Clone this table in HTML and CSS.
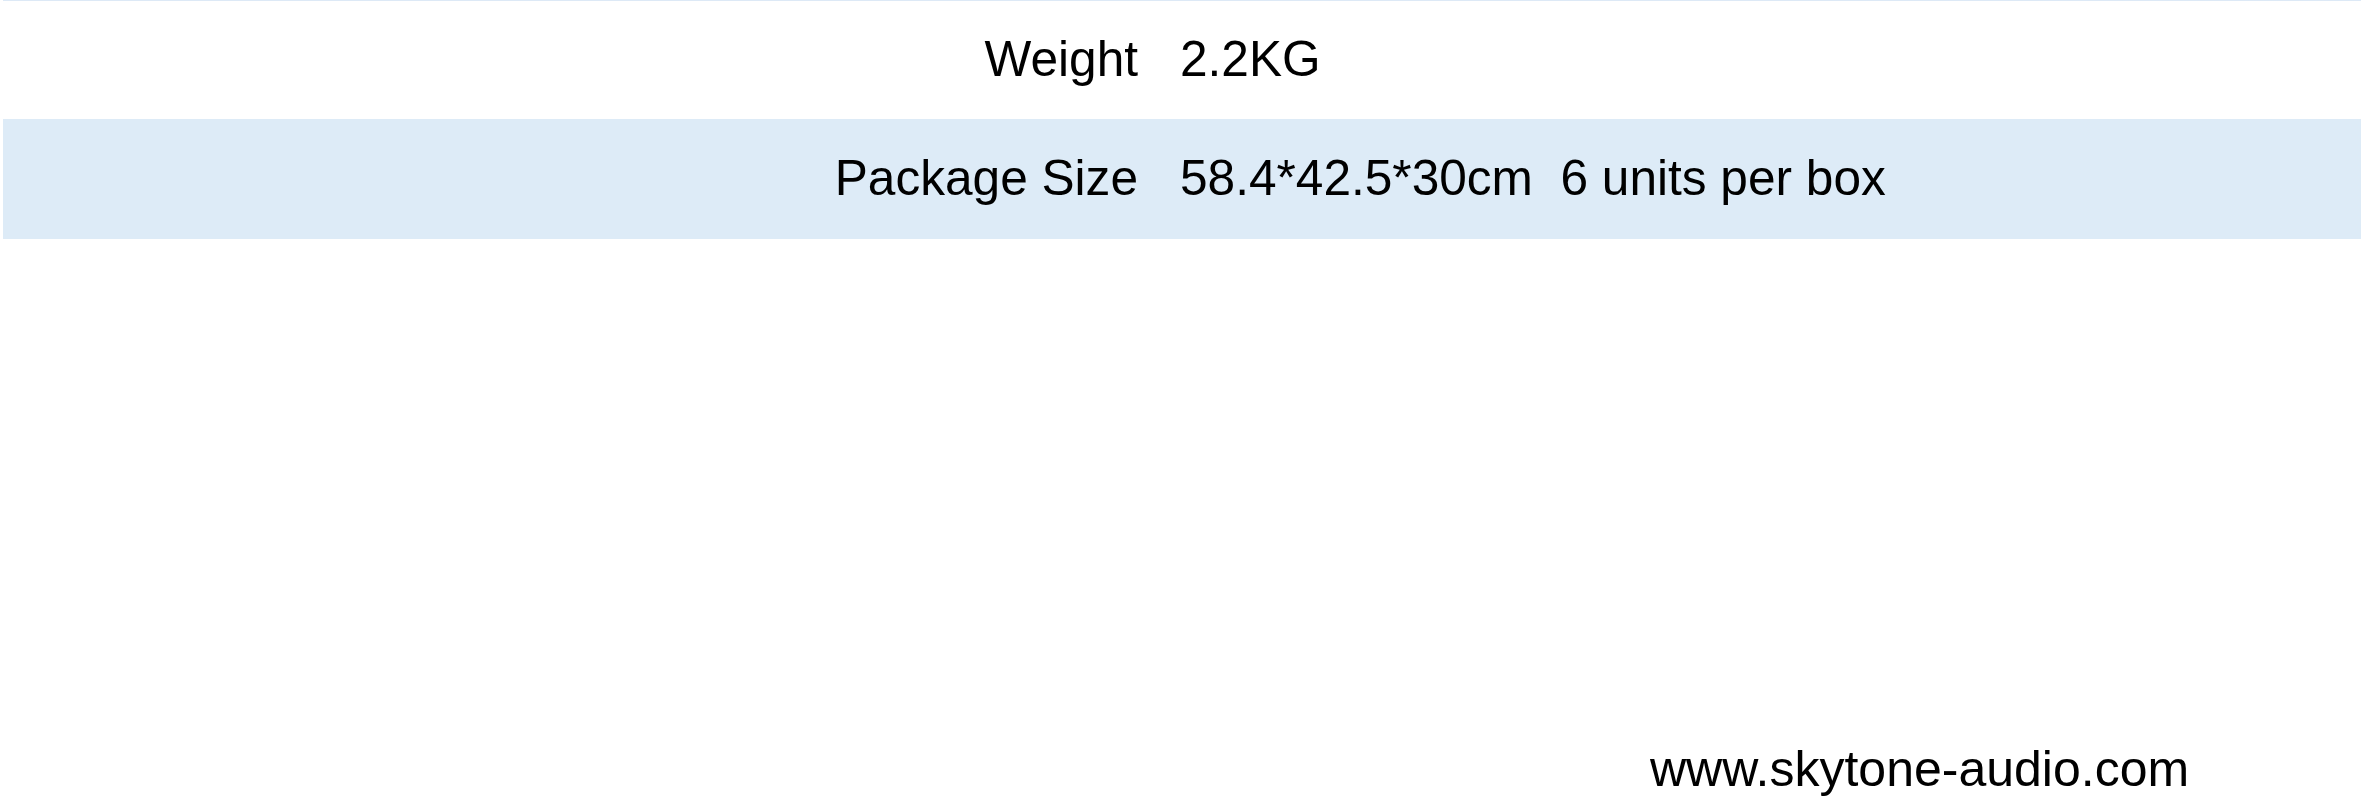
FILE: index.html
```html
<!DOCTYPE html>
<html lang="en">
<head>
<meta charset="utf-8">
<title>Specifications</title>
<link rel="stylesheet" href="styles.css">
</head>
<body>
<div class="page">
  <div class="specs">
    <div class="row row-first">
      <div class="label">Weight</div>
      <div class="value">2.2KG</div>
    </div>
    <div class="row row-shaded">
      <div class="label">Package Size</div>
      <div class="value">58.4*42.5*30cm&nbsp; 6 units per box</div>
    </div>
  </div>
  <div class="footer">www.skytone-audio.com</div>
</div>
</body>
</html>
```

FILE: styles.css
```css
html, body {
  margin: 0;
  padding: 0;
  background: #ffffff;
}

.page {
  width: 2361px;
  height: 802px;
  font-family: "Liberation Sans", Arial, sans-serif;
  color: #000000;
  overflow: hidden;
}

.specs {
  padding-left: 3px;
}

.row {
  display: grid;
  grid-template-columns: 1135px 1fr;
  align-items: center;
  font-size: 49.6px;
  line-height: 1.149;
  box-sizing: border-box;
  padding-bottom: 1px;
}

.row-first {
  height: 119px;
  border-top: 1px solid #dde9f6;
}

.row-shaded {
  height: 120px;
  background: #ddebf7;
}

.label {
  text-align: right;
}

.value {
  padding-left: 42px;
  white-space: nowrap;
}

.footer {
  margin-top: 501px;
  padding-left: 1650px;
  font-size: 50px;
  line-height: 58px;
  white-space: nowrap;
}
```
